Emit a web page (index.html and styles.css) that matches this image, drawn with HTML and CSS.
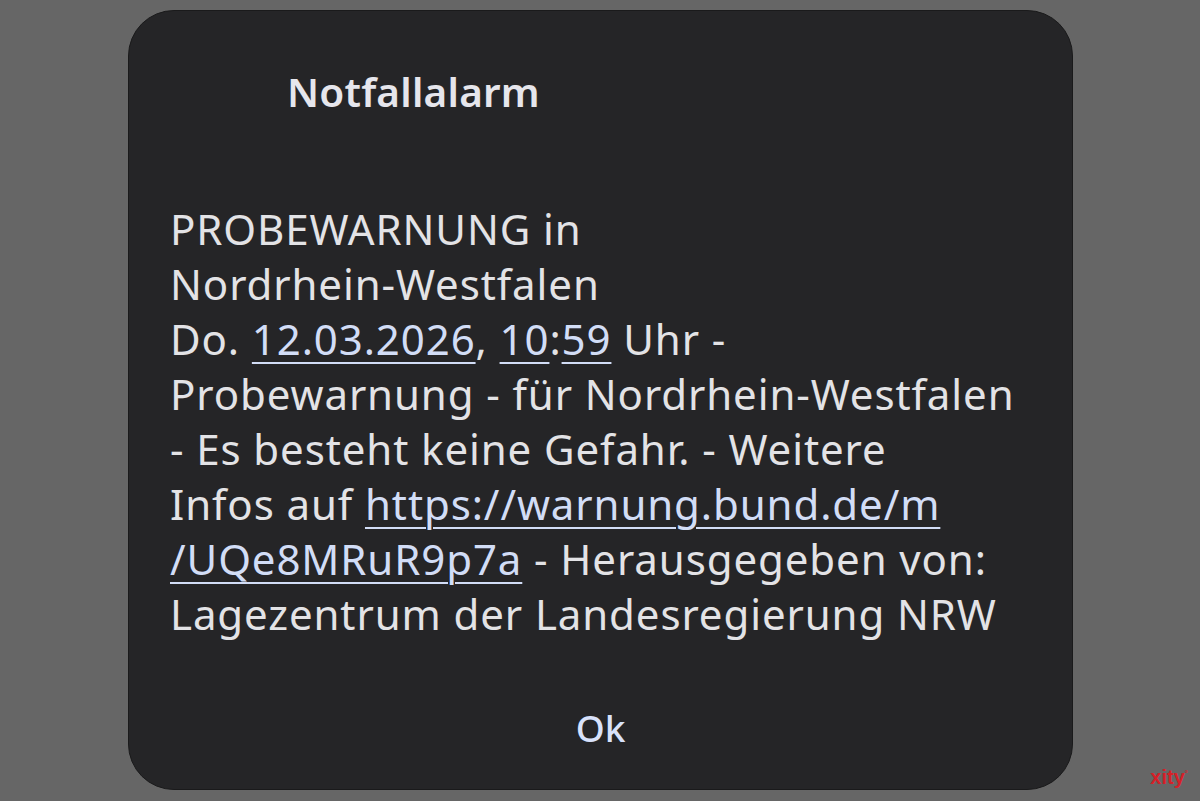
FILE: index.html
```html
<!DOCTYPE html>
<html lang="de">
<head>
  <meta charset="UTF-8" />
  <title>Notfallalarm</title>
  <link rel="stylesheet" href="styles.css">
</head>
<body>
  <div class="screen">
    <div class="dialog">
      <h1 class="title">Notfallalarm</h1>
      <p class="message">
        PROBEWARNUNG in<br>
        Nordrhein-Westfalen<br>
        Do. <a href="#">12.03.2026</a>, <a href="#">10</a>:<a href="#">59</a> Uhr -<br>
        Probewarnung - für Nordrhein-Westfalen<br>
        - Es besteht keine Gefahr. - Weitere<br>
        Infos auf <a href="#">https://warnung.bund.de/m<br>/UQe8MRuR9p7a</a> - Herausgegeben von:<br>
        Lagezentrum der Landesregierung NRW
      </p>
      <div class="actions">
        <button class="ok">Ok</button>
      </div>
    </div>
    <div class="watermark">xity<sup>°</sup></div>
  </div>
</body>
</html>
```

FILE: styles.css
```css
body {
  margin: 0;
  background: #666666;
  font-family: "Noto Sans", "Open Sans", sans-serif;
}

.screen {
  width: 1200px;
  height: 801px;
  position: relative;
  padding: 10px 0 0 128px;
  box-sizing: border-box;
}

.dialog {
  width: 945px;
  height: 780px;
  background: #252527;
  border: 1px solid #1a1a1b;
  box-sizing: border-box;
  border-radius: 46px;
  display: flex;
  flex-direction: column;
}

.title {
  margin: 55px 0 0 158px;
  font-size: 40.5px;
  font-weight: 600;
  color: #e6e6ec;
  line-height: 52px;
  letter-spacing: 0.2px;
}

.message {
  margin: 83px 0 0 41px;
  font-size: 42px;
  line-height: 55px;
  letter-spacing: 0.9px;
  color: #e3e3e6;
}

.message a {
  color: #d2ddf6;
  text-decoration: underline;
  text-decoration-thickness: 2px;
  text-underline-offset: 7px;
}

.actions {
  margin-top: auto;
  display: flex;
  justify-content: center;
  padding-bottom: 36px;
}

.ok {
  background: none;
  border: none;
  font-family: inherit;
  font-size: 37px;
  font-weight: 500;
  color: #d8e2fb;
  padding: 0 10px;
}

.watermark {
  position: absolute;
  right: 12px;
  bottom: 12px;
  color: #d52028;
  font-size: 20px;
  font-weight: bold;
  font-family: "Liberation Sans", sans-serif;
}

.watermark sup {
  font-size: 8px;
}
```
